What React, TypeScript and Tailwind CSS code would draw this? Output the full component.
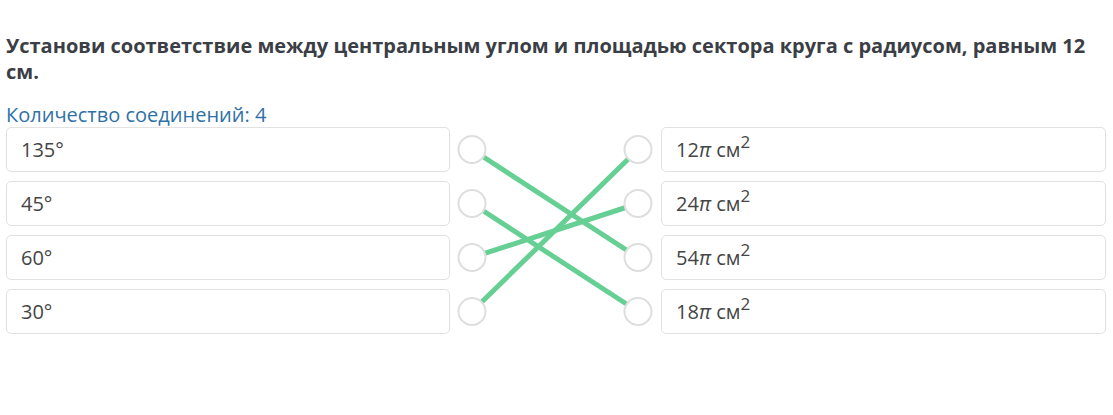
const left = ['135°', '45°', '60°', '30°'];
const right = ['12', '24', '54', '18'];

// left index -> right index
const links: [number, number][] = [
  [0, 2],
  [1, 3],
  [2, 1],
  [3, 0],
];

const ROW = 54;
const TOP = 22.5;
const LX = 22;
const RX = 188;

export default function App() {
  return (
    <div className="min-h-screen bg-white px-[6px] pt-[33px]" style={{ fontFamily: '"Open Sans", sans-serif' }}>
      <h1 className="text-[20px] leading-[26px] font-bold text-[#3b3e45] pr-2">
        Установи соответствие между центральным углом и площадью сектора круга с радиусом, равным 12 см.
      </h1>

      <div className="mt-[18px] text-[20px] leading-[24px] text-[#2f71a6]">Количество соединений: 4</div>

      <div className="flex w-[1100px]">
        <div className="flex flex-col gap-[9px] w-[444px]">
          {left.map((t) => (
            <div key={t} className="h-[45px] flex items-center pl-[14px] border border-[#e2e2e2] rounded-[5px] text-[20px] text-[#454545]">
              {t}
            </div>
          ))}
        </div>

        <svg width="211" height="207" viewBox="0 0 211 207" className="shrink-0">
          {links.map(([a, b]) => (
            <line
              key={a}
              x1={LX}
              y1={TOP + a * ROW}
              x2={RX}
              y2={TOP + b * ROW}
              stroke="#66cf94"
              strokeWidth="5"
            />
          ))}
          {[0, 1, 2, 3].map((i) => (
            <g key={i}>
              <circle cx={LX} cy={TOP + i * ROW} r="13.5" fill="white" stroke="#dedede" strokeWidth="2" />
              <circle cx={RX} cy={TOP + i * ROW} r="13.5" fill="white" stroke="#dedede" strokeWidth="2" />
            </g>
          ))}
        </svg>

        <div className="flex flex-col gap-[9px] w-[445px]">
          {right.map((t) => (
            <div key={t} className="h-[45px] flex items-center pl-[14px] border border-[#e2e2e2] rounded-[5px] text-[20px] text-[#454545]">
              <span>
                {t}
                <span className="italic">π</span> см<sup className="text-[17px]">2</sup>
              </span>
            </div>
          ))}
        </div>
      </div>
    </div>
  );
}
